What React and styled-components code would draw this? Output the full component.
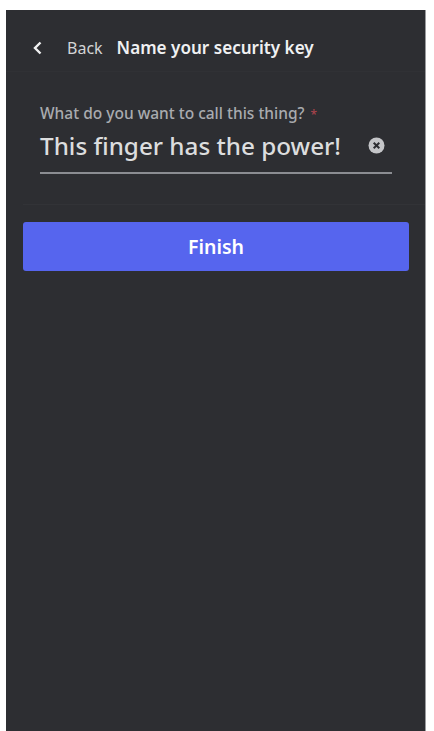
import React from 'react';
import styled, { createGlobalStyle } from 'styled-components';

const GlobalStyle = createGlobalStyle`
  html, body {
    margin: 0;
    height: 100%;
    background: #fff;
  }
  #root {
    height: 100%;
  }
`;

const Page = styled.div`
  box-sizing: border-box;
  height: 731px;
  padding: 10px 8px 0 6px;
  font-family: "Noto Sans", sans-serif;
  overflow: hidden;
`;

const Screen = styled.div`
  height: 100%;
  background: #2d2e32;
  border-right: 1px solid #9a9b9e;
  display: flex;
  flex-direction: column;
`;

const Header = styled.div`
  height: 62px;
  box-sizing: border-box;
  display: flex;
  align-items: center;
  padding: 14px 0 0 26px;
  border-bottom: 1px solid #303135;
`;

const BackIcon = styled.svg`
  width: 10px;
  height: 14px;
  margin-right: 25px;
`;

const BackLabel = styled.span`
  font-size: 16px;
  color: #d3d4d6;
  margin-right: 14px;
`;

const Title = styled.h1`
  margin: 0;
  font-size: 17.1px;
  font-weight: 600;
  color: #f0f1f2;
`;

const Form = styled.div`
  margin-left: 17px;
  padding: 31px 33px 30px 17px;
  border-bottom: 1px solid #323337;
`;

const Label = styled.div`
  font-size: 15.5px;
  font-weight: 500;
  line-height: 20px;
  color: #a9abaf;
`;

const Required = styled.span`
  color: #a8434c;
  margin-left: 6px;
  font-size: 12px;
`;

const InputRow = styled.div`
  height: 49px;
  box-sizing: border-box;
  display: flex;
  align-items: center;
  justify-content: space-between;
  padding: 0 7px 6px 0;
  border-bottom: 2px solid #8b8d92;
`;

const Value = styled.span`
  font-size: 24.25px;
  font-weight: 500;
  color: #dcddde;
`;

const ClearIcon = styled.svg`
  width: 17px;
  height: 17px;
`;

const Actions = styled.div`
  padding: 17px 16px 0 17px;
`;

const Button = styled.button`
  display: block;
  width: 100%;
  height: 49px;
  border: 0;
  border-radius: 3px;
  background: #5665ee;
  color: #fff;
  font-family: inherit;
  font-size: 19.5px;
  font-weight: 600;
`;

export default function App() {
  return (
    <Page>
      <GlobalStyle />
      <Screen>
        <Header>
          <BackIcon viewBox="0 0 10 14">
            <path d="M8.5 1.5 L3 7 L8.5 12.5" fill="none" stroke="#f0f1f2" strokeWidth="2.4" />
          </BackIcon>
          <BackLabel>Back</BackLabel>
          <Title>Name your security key</Title>
        </Header>
        <Form>
          <Label>
            What do you want to call this thing?<Required>*</Required>
          </Label>
          <InputRow>
            <Value>This finger has the power!</Value>
            <ClearIcon viewBox="0 0 17 17">
              <circle cx="8.5" cy="8.5" r="8" fill="#c4c5c8" />
              <path d="M5.7 5.7 L11.3 11.3 M11.3 5.7 L5.7 11.3" stroke="#2d2e32" strokeWidth="2" />
            </ClearIcon>
          </InputRow>
        </Form>
        <Actions>
          <Button>Finish</Button>
        </Actions>
      </Screen>
    </Page>
  );
}
